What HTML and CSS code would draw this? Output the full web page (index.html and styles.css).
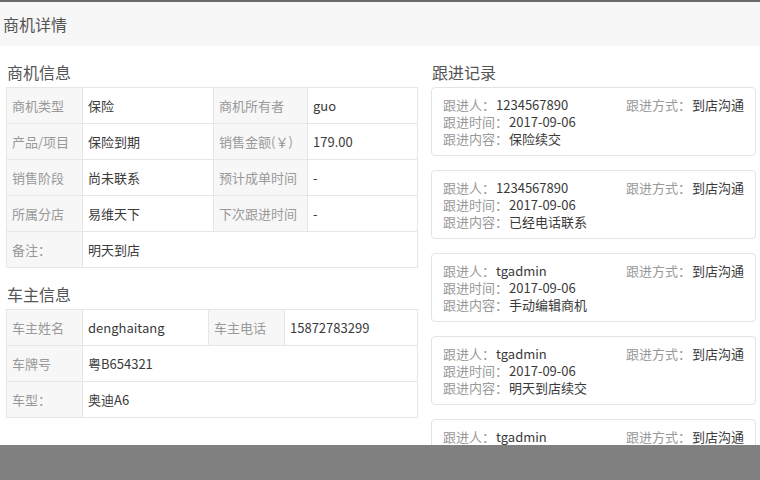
FILE: index.html
```html
<!DOCTYPE html>
<html lang="zh-CN">
<head>
    <meta charset="UTF-8">
    <title>商机详情</title>
    <link rel="stylesheet" href="styles.css">
</head>
<body>
    <div class="page-head">商机详情</div>

    <div class="main">
        <div class="col-left">
            <div class="section-title">商机信息</div>
            <table class="info-table">
                <colgroup>
                    <col style="width:76px"><col style="width:131px"><col style="width:94px"><col>
                </colgroup>
                <tr>
                    <th>商机类型</th><td>保险</td>
                    <th>商机所有者</th><td>guo</td>
                </tr>
                <tr>
                    <th>产品/项目</th><td>保险到期</td>
                    <th>销售金额(￥)</th><td>179.00</td>
                </tr>
                <tr>
                    <th>销售阶段</th><td>尚未联系</td>
                    <th>预计成单时间</th><td>-</td>
                </tr>
                <tr>
                    <th>所属分店</th><td>易维天下</td>
                    <th>下次跟进时间</th><td>-</td>
                </tr>
                <tr>
                    <th>备注：</th><td colspan="3">明天到店</td>
                </tr>
            </table>

            <div class="section-title">车主信息</div>
            <table class="info-table">
                <colgroup>
                    <col style="width:76px"><col style="width:126px"><col style="width:76px"><col>
                </colgroup>
                <tr>
                    <th>车主姓名</th><td>denghaitang</td>
                    <th>车主电话</th><td>15872783299</td>
                </tr>
                <tr>
                    <th>车牌号</th><td colspan="3">粤B654321</td>
                </tr>
                <tr>
                    <th>车型：</th><td colspan="3">奥迪A6</td>
                </tr>
            </table>
        </div>

        <div class="col-right">
            <div class="section-title">跟进记录</div>

            <div class="record">
                <div class="record-line record-top">
                    <div class="pair"><span class="lbl">跟进人：</span><span>1234567890</span></div>
                    <div class="pair"><span class="lbl">跟进方式：</span><span>到店沟通</span></div>
                </div>
                <div class="record-line"><span class="lbl">跟进时间：</span><span>2017-09-06</span></div>
                <div class="record-line"><span class="lbl">跟进内容：</span><span>保险续交</span></div>
            </div>

            <div class="record">
                <div class="record-line record-top">
                    <div class="pair"><span class="lbl">跟进人：</span><span>1234567890</span></div>
                    <div class="pair"><span class="lbl">跟进方式：</span><span>到店沟通</span></div>
                </div>
                <div class="record-line"><span class="lbl">跟进时间：</span><span>2017-09-06</span></div>
                <div class="record-line"><span class="lbl">跟进内容：</span><span>已经电话联系</span></div>
            </div>

            <div class="record">
                <div class="record-line record-top">
                    <div class="pair"><span class="lbl">跟进人：</span><span>tgadmin</span></div>
                    <div class="pair"><span class="lbl">跟进方式：</span><span>到店沟通</span></div>
                </div>
                <div class="record-line"><span class="lbl">跟进时间：</span><span>2017-09-06</span></div>
                <div class="record-line"><span class="lbl">跟进内容：</span><span>手动编辑商机</span></div>
            </div>

            <div class="record">
                <div class="record-line record-top">
                    <div class="pair"><span class="lbl">跟进人：</span><span>tgadmin</span></div>
                    <div class="pair"><span class="lbl">跟进方式：</span><span>到店沟通</span></div>
                </div>
                <div class="record-line"><span class="lbl">跟进时间：</span><span>2017-09-06</span></div>
                <div class="record-line"><span class="lbl">跟进内容：</span><span>明天到店续交</span></div>
            </div>

            <div class="record">
                <div class="record-line record-top">
                    <div class="pair"><span class="lbl">跟进人：</span><span>tgadmin</span></div>
                    <div class="pair"><span class="lbl">跟进方式：</span><span>到店沟通</span></div>
                </div>
                <div class="record-line"><span class="lbl">跟进时间：</span><span>2017-09-06</span></div>
                <div class="record-line"><span class="lbl">跟进内容：</span><span>到店续交</span></div>
            </div>
        </div>
    </div>

    <div class="bottom-bar"></div>
</body>
</html>
```

FILE: styles.css
```css
body {
    margin: 0;
    padding: 0;
    font-family: "Noto Sans CJK SC", "Noto Sans", sans-serif;
    font-size: 13px;
    color: #3a3a3a;
    background: #fff;
    border-top: 2px solid #6b6b6b;
    overflow: hidden;
}
.page-head {
    height: 44px;
    line-height: 44px;
    padding-left: 3px;
    background-color: #f7f7f7;
    font-size: 16px;
    color: #555;
}
.main {
    display: flex;
    gap: 13px;
    padding: 0 4px 0 6px;
}
.col-left {
    width: 412px;
}
.col-right {
    flex: 1;
}
.section-title {
    padding-top: 14px;
    height: 27px;
    line-height: 24px;
    font-size: 16px;
    color: #555;
    padding-left: 1px;
}
.info-table {
    width: 100%;
    border-collapse: collapse;
    table-layout: fixed;
}
.info-table th,
.info-table td {
    height: 35px;
    padding: 0 5px;
    border: 1px solid #e6e6e6;
    text-align: left;
    white-space: nowrap;
}
.info-table th {
    font-weight: normal;
    background-color: #f7f7f7;
    color: #999;
}

/* follow-up records */
.record {
    border: 1px solid #e3e3e3;
    border-radius: 4px;
    padding: 8px 11px;
    margin-bottom: 14px;
}
.record-line {
    display: flex;
    height: 17px;
    line-height: 17px;
}
.record-top {
    justify-content: space-between;
}
.pair {
    display: flex;
}
.lbl {
    color: #999;
    margin-right: 1px;
}
.bottom-bar {
    position: fixed;
    left: 0;
    right: 0;
    bottom: 0;
    height: 35px;
    background-color: #808080;
}
```
